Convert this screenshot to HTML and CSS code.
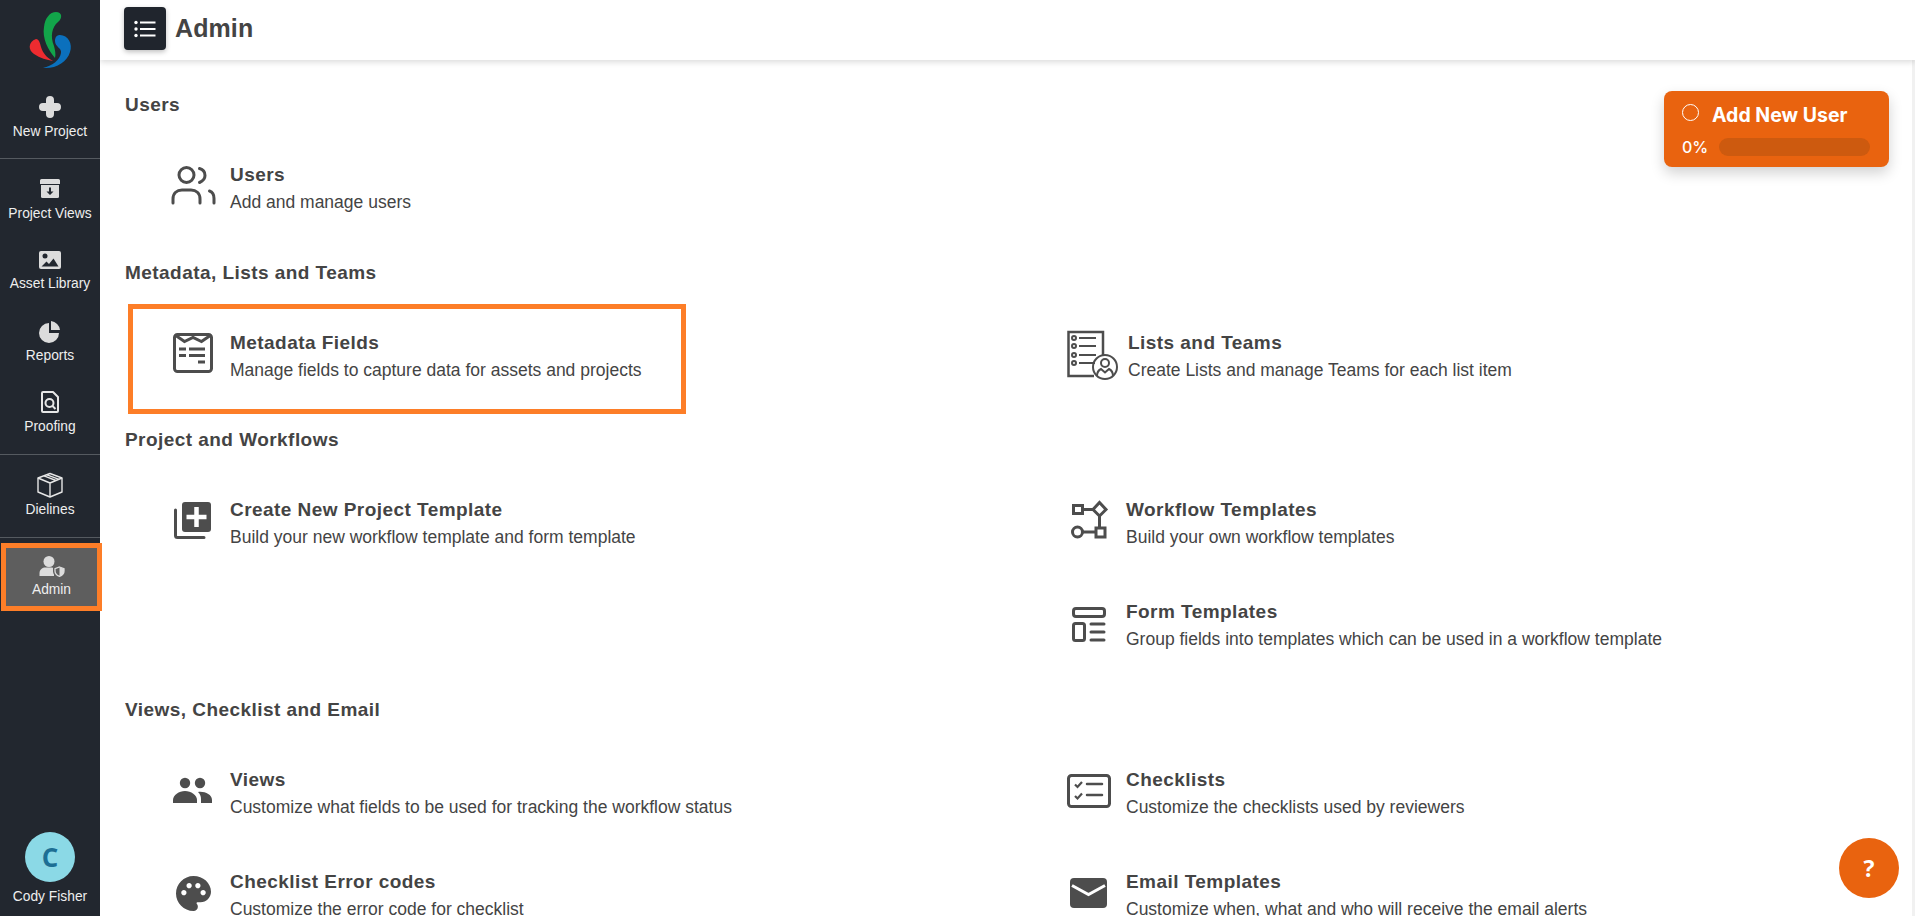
FILE: index.html
```html
<!doctype html>
<html lang="en">
<head>
    <meta charset="UTF-8">
    <title>Admin</title>
    <link rel="stylesheet" href="styles.css">
</head>
<body>
<div class="app">
    <aside class="sidebar">
        <div class="logo">
            <svg width="100" height="82" viewBox="0 0 100 82">
                <path fill="#12a54a" d="M56 12C62 12 63 18 58 22C52 27 50 36 54 46C55 50 56 54 55 58C48 50 42 38 44 27C45 18 50 12 56 12Z"/>
                <path fill="#ee2b30" d="M36 39C28 42 28 50 34 54C40 58 47 60 53 61C46 57 43 53 41 47C40 43 39 39 36 39Z"/>
                <path fill="#0b70bd" d="M60 35C68 35 73 44 70 52C67 62 56 69 43 68C52 66 60 60 61 53C62 48 55 47 55 41C55 37 57 35 60 35Z"/>
            </svg>
        </div>
        <div class="nav-group first">
            <a class="nav-item">
                <svg width="30" height="30" viewBox="0 0 30 30"><path fill="none" stroke="#dcdcdc" stroke-width="8" stroke-linejoin="round" stroke-linecap="round" d="M15 8V22M8 15H22"/></svg>
                <span>New Project</span>
            </a>
        </div>
        <div class="nav-group">
            <a class="nav-item">
                <svg width="30" height="30" viewBox="0 0 30 30">
                    <path fill="#dcdcdc" d="M6.500 5h17a1.500 1.500 0 0 1 1.500 1.500V10H5V6.500A1.500 1.500 0 0 1 6.500 5Z"/>
                    <path fill="#dcdcdc" d="M6 11h18v11.500a1.500 1.500 0 0 1-1.500 1.500h-15A1.500 1.500 0 0 1 6 22.500Z"/>
                    <path fill="#22272f" d="M14 13.500h2v4h2.500L15 21l-3.500-3.500H14Z"/>
                </svg>
                <span>Project Views</span>
            </a>
            <a class="nav-item">
                <svg width="30" height="30" viewBox="0 0 30 30">
                    <rect x="4" y="6" width="22" height="18" rx="2" fill="#dcdcdc"/>
                    <circle cx="10" cy="11" r="2.500" fill="#22272f"/>
                    <path fill="#22272f" d="M6.500 21.500l5-5 2.500 2.500 4.500-5.500 5 8Z"/>
                </svg>
                <span class="tight">Asset Library</span>
            </a>
            <a class="nav-item">
                <svg width="30" height="30" viewBox="0 0 30 30">
                    <path fill="#dcdcdc" d="M14 7v10h10a10 10 0 1 1-10-10Z"/>
                    <path fill="#dcdcdc" d="M16 5a10 10 0 0 1 9 9H16Z"/>
                </svg>
                <span>Reports</span>
            </a>
            <a class="nav-item">
                <svg width="30" height="30" viewBox="0 0 30 30">
                    <path fill="none" stroke="#e6e6e6" stroke-width="2" stroke-linejoin="round" d="M8 5h10l5 5v14a1 1 0 0 1-1 1H8a1 1 0 0 1-1-1V6a1 1 0 0 1 1-1Z"/>
                    <circle cx="14.500" cy="16" r="4" fill="none" stroke="#e6e6e6" stroke-width="2"/>
                    <path stroke="#e6e6e6" stroke-width="2" d="M17.500 19l3 3"/>
                </svg>
                <span>Proofing</span>
            </a>
        </div>
        <div class="nav-group">
            <a class="nav-item">
                <svg width="30" height="30" viewBox="0 0 30 30" fill="none" stroke="#e6e6e6" stroke-width="1.400" stroke-linejoin="round">
                    <path d="M15 3.500L27 8V22L15 27L3 22V8Z"/>
                    <path d="M3 8L15 13L27 8M15 13V27M9 5.800L21 10.500M12 4.800L24 9.300"/>
                </svg>
                <span>Dielines</span>
            </a>
        </div>
        <div class="nav-group last">
            <a class="nav-item active">
                <svg width="30" height="30" viewBox="0 0 30 30">
                    <circle cx="12" cy="9.500" r="5.500" fill="#dcdcdc"/>
                    <path fill="#dcdcdc" d="M2.500 24v-3c0-3.500 3-5.500 6-5.500h6c1 0 2 .2 2.500.6V24Z"/>
                    <path fill="#5e5e5e" d="M22.500 13l6.500 2.500v3.500c0 3.500-2.500 6-6.500 7.500-4-1.500-6.500-4-6.500-7.500v-3.500Z"/>
                    <path fill="none" stroke="#dcdcdc" stroke-width="1.300" d="M22.500 15l4.500 1.700v2.300c0 2.500-1.700 4.300-4.500 5.400-2.800-1.100-4.500-2.900-4.500-5.400v-2.300Z"/>
                    <path fill="#dcdcdc" d="M22.500 15l4.500 1.700v2.300c0 2.500-1.700 4.300-4.500 5.400Z"/>
                </svg>
                <span>Admin</span>
            </a>
        </div>
        <div class="user">
            <div class="avatar">C</div>
            <span>Cody Fisher</span>
        </div>
    </aside>

    <div class="main">
        <header class="topbar">
            <a class="menu-btn">
                <svg width="22" height="18" viewBox="0 0 22 18" fill="#fff">
                    <circle cx="2" cy="2.500" r="1.700"/><circle cx="2" cy="9" r="1.700"/><circle cx="2" cy="15.500" r="1.700"/>
                    <rect x="6" y="1.500" width="15.500" height="2"/><rect x="6" y="8" width="15.500" height="2"/><rect x="6" y="14.500" width="15.500" height="2"/>
                </svg>
            </a>
            <h1>Admin</h1>
        </header>
        <div class="page">
            <section class="section">
                <h2>Users</h2>
                <div class="grid">
                    <a class="item">
                        <svg class="icon" width="47" height="48" viewBox="0 0 47 48" fill="none" stroke="#4d4d4d" stroke-width="3" stroke-linecap="round">
                            <circle cx="15.500" cy="14" r="7.500"/>
                            <path d="M28.500 7.500c4 1 5.500 4 5.500 7s-2 5.500-5.500 7"/>
                            <path d="M2 42v-4c0-6 4-9 9-9h9c5 0 9 3 9 9v4"/>
                            <path d="M38.500 30c3 1 4.500 4 4.500 7.500V42"/>
                        </svg>
                        <div class="text"><h3>Users</h3><p>Add and manage users</p></div>
                    </a>
                </div>
            </section>

            <section class="section">
                <h2>Metadata, Lists and Teams</h2>
                <div class="grid">
                    <a class="item marked">
                        <svg class="icon" width="47" height="48" viewBox="0 0 47 48" fill="none" stroke="#4d4d4d" stroke-width="3">
                            <rect x="3.500" y="5.500" width="37" height="37" rx="3"/>
                            <path d="M4 6L13.500 12.500L22 8.500L30.500 12.500L40 6"/>
                            <path d="M8 20H15M18 20H34M8 26.500H15M18 26.500H34M27 33H34"/>
                        </svg>
                        <div class="text"><h3>Metadata Fields</h3><p>Manage fields to capture data for assets and projects</p></div>
                    </a>
                    <a class="item wide">
                        <svg class="icon" width="52" height="52" viewBox="0 0 52 52" fill="none" stroke="#4d4d4d" stroke-width="2">
                            <path stroke-width="2.500" d="M27 47H1.500V3H36V26"/>
                            <circle cx="7" cy="9" r="2"/><circle cx="7" cy="17" r="2"/><circle cx="7" cy="26" r="2"/><circle cx="7" cy="34" r="2"/>
                            <path d="M12 9H29M12 17H29M12 26H29M12 34H28"/>
                            <circle cx="38" cy="38" r="12"/>
                            <circle cx="38" cy="34" r="4"/>
                            <path d="M30 47c0-4 2-6 4-7l4 3.500 4-3.500c2 1 4 3 4 7"/>
                        </svg>
                        <div class="text"><h3>Lists and Teams</h3><p>Create Lists and manage Teams for each list item</p></div>
                    </a>
                </div>
            </section>

            <section class="section">
                <h2>Project and Workflows</h2>
                <div class="grid">
                    <a class="item">
                        <svg class="icon" width="47" height="48" viewBox="0 0 47 48">
                            <rect x="11" y="6" width="29" height="30" rx="3" fill="#4d4d4d"/>
                            <path stroke="#fff" stroke-width="4.500" d="M25.500 11V31M15.500 21H35.500"/>
                            <path fill="none" stroke="#4d4d4d" stroke-width="3" stroke-linecap="round" d="M4.500 14V39.500a2 2 0 0 0 2 2H33"/>
                        </svg>
                        <div class="text"><h3>Create New Project Template</h3><p>Build your new workflow template and form template</p></div>
                    </a>
                    <a class="item">
                        <svg class="icon" width="47" height="48" viewBox="0 0 47 48" fill="none" stroke="#4d4d4d" stroke-width="3">
                            <rect x="6.500" y="9.500" width="9" height="8"/>
                            <path d="M32.500 6.500L39 13.500L32.500 20L26 13.500Z"/>
                            <path d="M15.500 13.500H26M32.500 20V32"/>
                            <circle cx="10.500" cy="36" r="5"/>
                            <path d="M15.500 36H29"/>
                            <rect x="29" y="32" width="9" height="9"/>
                        </svg>
                        <div class="text"><h3>Workflow Templates</h3><p>Build your own workflow templates</p></div>
                    </a>
                    <div class="item blank"></div>
                    <a class="item">
                        <svg class="icon" width="47" height="48" viewBox="0 0 47 48" fill="none" stroke="#4d4d4d" stroke-width="3" stroke-linecap="round">
                            <rect x="6.500" y="10.500" width="31" height="8" rx="2.500"/>
                            <rect x="6.500" y="25.500" width="11" height="17" rx="2"/>
                            <path d="M24 26H37M24 34H37M24 42H37"/>
                        </svg>
                        <div class="text"><h3>Form Templates</h3><p>Group fields into templates which can be used in a workflow template</p></div>
                    </a>
                </div>
            </section>

            <section class="section">
                <h2>Views, Checklist and Email</h2>
                <div class="grid">
                    <a class="item">
                        <svg class="icon" width="47" height="48" viewBox="0 0 47 48" fill="#4d4d4d">
                            <circle cx="14" cy="17" r="5.200"/><circle cx="29" cy="17" r="5.200"/>
                            <path d="M2 37v-3c0-5 6-9 12-9s12 4 12 9v3Z"/>
                            <path d="M30 37v-4c0-3-1-5-3-7 6-1 14 2 14 8v3Z"/>
                        </svg>
                        <div class="text"><h3>Views</h3><p>Customize what fields to be used for tracking the workflow status</p></div>
                    </a>
                    <a class="item">
                        <svg class="icon" width="47" height="48" viewBox="0 0 47 48" fill="none" stroke="#4d4d4d">
                            <rect x="1.500" y="9.500" width="41" height="31" rx="3" stroke-width="3"/>
                            <path stroke-width="2.200" d="M8 18.500l2.500 2.500 4.500-5M8 30l2.500 2.500 4.500-5"/>
                            <path stroke-width="2.500" stroke-linecap="round" d="M20 18H35M20 29H35"/>
                        </svg>
                        <div class="text"><h3>Checklists</h3><p>Customize the checklists used by reviewers</p></div>
                    </a>
                    <a class="item">
                        <svg class="icon" width="47" height="48" viewBox="0 0 47 48">
                            <g transform="translate(1.500 4.500) scale(1.750)">
                                <path fill="#4d4d4d" d="M12 2C6.490 2 2 6.490 2 12s4.490 10 10 10c1.380 0 2.500-1.120 2.500-2.500 0-.61-.23-1.200-.64-1.670-.08-.1-.13-.21-.13-.33 0-.28.22-.5.5-.5H16c3.310 0 6-2.690 6-6 0-4.960-4.490-9-10-9zm5.500 11c-.83 0-1.500-.67-1.500-1.500s.67-1.500 1.500-1.500 1.500.67 1.500 1.500-.67 1.500-1.500 1.500zm-3-4c-.83 0-1.500-.67-1.500-1.500S13.670 6 14.500 6s1.500.67 1.500 1.500S15.330 9 14.500 9zM5 11.500c0-.83.67-1.500 1.500-1.500s1.500.67 1.500 1.500S7.330 13 6.500 13 5 12.330 5 11.500zm6-4c0 .83-.67 1.500-1.500 1.500S8 8.330 8 7.500 8.670 6 9.500 6s1.500.67 1.500 1.500z"/>
                            </g>
                        </svg>
                        <div class="text"><h3>Checklist Error codes</h3><p>Customize the error code for checklist</p></div>
                    </a>
                    <a class="item">
                        <svg class="icon" width="47" height="48" viewBox="0 0 47 48">
                            <rect x="3" y="10" width="37" height="30" rx="4" fill="#4d4d4d"/>
                            <path fill="none" stroke="#fff" stroke-width="3" d="M5 17.500L21.500 26.500L38 17.500"/>
                        </svg>
                        <div class="text"><h3>Email Templates</h3><p>Customize when, what and who will receive the email alerts</p></div>
                    </a>
                </div>
            </section>
        </div>
    </div>
</div>

<div class="task-card">
    <div class="task-title"><span class="task-dot"></span>Add New User</div>
    <div class="task-progress"><span>0%</span><div class="task-bar"></div></div>
</div>
<a class="help-btn">?</a>
</body>
</html>
```

FILE: styles.css
```css
* {
    padding: 0;
    margin: 0;
    box-sizing: border-box;
}

body {
    height: 100vh;
    overflow: hidden;
    background: #fff;
    color: #444;
    font-family: "Liberation Sans", Arial, sans-serif;
}

.app {
    display: flex;
    height: 100%;
}

/* left menu */
.sidebar {
    position: relative;
    z-index: 2;
    display: flex;
    flex-direction: column;
    flex: none;
    width: 100px;
    background: #22272f;
}

.logo {
    height: 82px;
}

.logo svg {
    display: block;
}

.nav-group {
    padding: 5px 0 6px;
    border-bottom: 1px solid #555a60;
}

.nav-group.first {
    padding: 0 0 5px;
}

.nav-group.last {
    border-bottom: none;
}

.nav-item {
    display: flex;
    flex-direction: column;
    align-items: center;
    height: 71px;
    padding-top: 10px;
    font-size: 13.8px;
    line-height: 16px;
    color: #eee;
}

.nav-item span {
    margin-top: 2px;
}

.nav-item span.tight {
    margin-top: 1px;
}

.nav-item.active {
    width: 101px;
    height: 68px;
    margin-left: 1px;
    padding-top: 4px;
    background: #5e5e5e;
    border: 5px solid #fd7e28;
}

.nav-item.active span {
    margin-top: 0;
}

.user {
    display: flex;
    flex-direction: column;
    align-items: center;
    margin-top: auto;
    padding-bottom: 11px;
    font-size: 13.8px;
    line-height: 16px;
    color: #eee;
}

.avatar {
    width: 50px;
    height: 50px;
    margin-bottom: 7px;
    border-radius: 50%;
    background: #8bd9e6;
    color: #1d6f94;
    font-family: "Open Sans", sans-serif;
    font-size: 26px;
    font-weight: 700;
    line-height: 50px;
    text-align: center;
}

/* right side */
.main {
    display: flex;
    flex-direction: column;
    flex: 1;
    min-width: 0;
}

.topbar {
    position: relative;
    z-index: 1;
    display: flex;
    align-items: center;
    flex: none;
    height: 60px;
    padding-left: 24px;
    background: #fff;
    box-shadow: 0 2px 6px rgba(0, 0, 0, .15);
}

.menu-btn {
    display: flex;
    align-items: center;
    justify-content: center;
    width: 42px;
    height: 43px;
    margin-top: -3px;
    border-radius: 4px;
    background: #20252d;
    box-shadow: 0 2px 5px rgba(0, 0, 0, .25);
}

.topbar h1 {
    margin-left: 9px;
    margin-top: -3px;
    font-size: 25px;
    letter-spacing: .1px;
    color: #444;
}

.page {
    flex: 1;
    overflow: hidden;
    padding: 33px 0 0 25px;
    border-right: 3px solid #f1f1f1;
}

.section {
    margin-bottom: 21.7px;
}

.section h2 {
    height: 24px;
    margin-bottom: 20px;
    font-size: 19px;
    line-height: 24px;
    letter-spacing: .45px;
    color: #444;
}

.grid {
    display: grid;
    grid-template-columns: 896px 1fr;
}

.item {
    position: relative;
    display: flex;
    align-items: flex-start;
    height: 102px;
    padding: 24px 0 0 46px;
}

.icon {
    flex: none;
    display: block;
}

.item .text {
    margin-left: 12px;
    padding-top: 1px;
}

.item.wide .text {
    margin-left: 9px;
}

.item h3 {
    font-size: 19px;
    line-height: 26px;
    letter-spacing: .45px;
    color: #444;
}

.item p {
    margin-top: 1px;
    font-size: 17.5px;
    line-height: 26px;
    color: #444;
}

/* orange box round the metadata item */
.item.marked::after {
    content: "";
    position: absolute;
    left: 3px;
    top: -1px;
    box-sizing: border-box;
    width: 558px;
    height: 110px;
    border: 5px solid #fd7e28;
}

.task-card {
    position: absolute;
    left: 1664px;
    top: 91px;
    width: 225px;
    height: 76px;
    padding: 12px 18px;
    border-radius: 8px;
    background: #e9630f;
    box-shadow: 0 6px 14px rgba(0, 0, 0, .18);
    color: #fff;
    font-family: Inter, sans-serif;
}

.task-title {
    display: flex;
    align-items: center;
    font-size: 19.5px;
    font-weight: 700;
    line-height: 24px;
}

.task-dot {
    width: 17px;
    height: 17px;
    margin-right: 13px;
    margin-top: -6px;
    border: 1.5px solid #fff;
    border-radius: 50%;
}

.task-progress {
    display: flex;
    align-items: center;
    margin-top: 10px;
    font-size: 16px;
    font-weight: 500;
}

.task-bar {
    flex: 1;
    height: 18px;
    margin: 0 1px 0 11px;
    border-radius: 9px;
    background: #cd5a0f;
}

.help-btn {
    position: absolute;
    left: 1839px;
    top: 838px;
    width: 60px;
    height: 60px;
    border-radius: 50%;
    background: #e9630f;
    color: #fff;
    font-family: "Open Sans", sans-serif;
    font-size: 23px;
    font-weight: 700;
    line-height: 60px;
    text-align: center;
}
```
